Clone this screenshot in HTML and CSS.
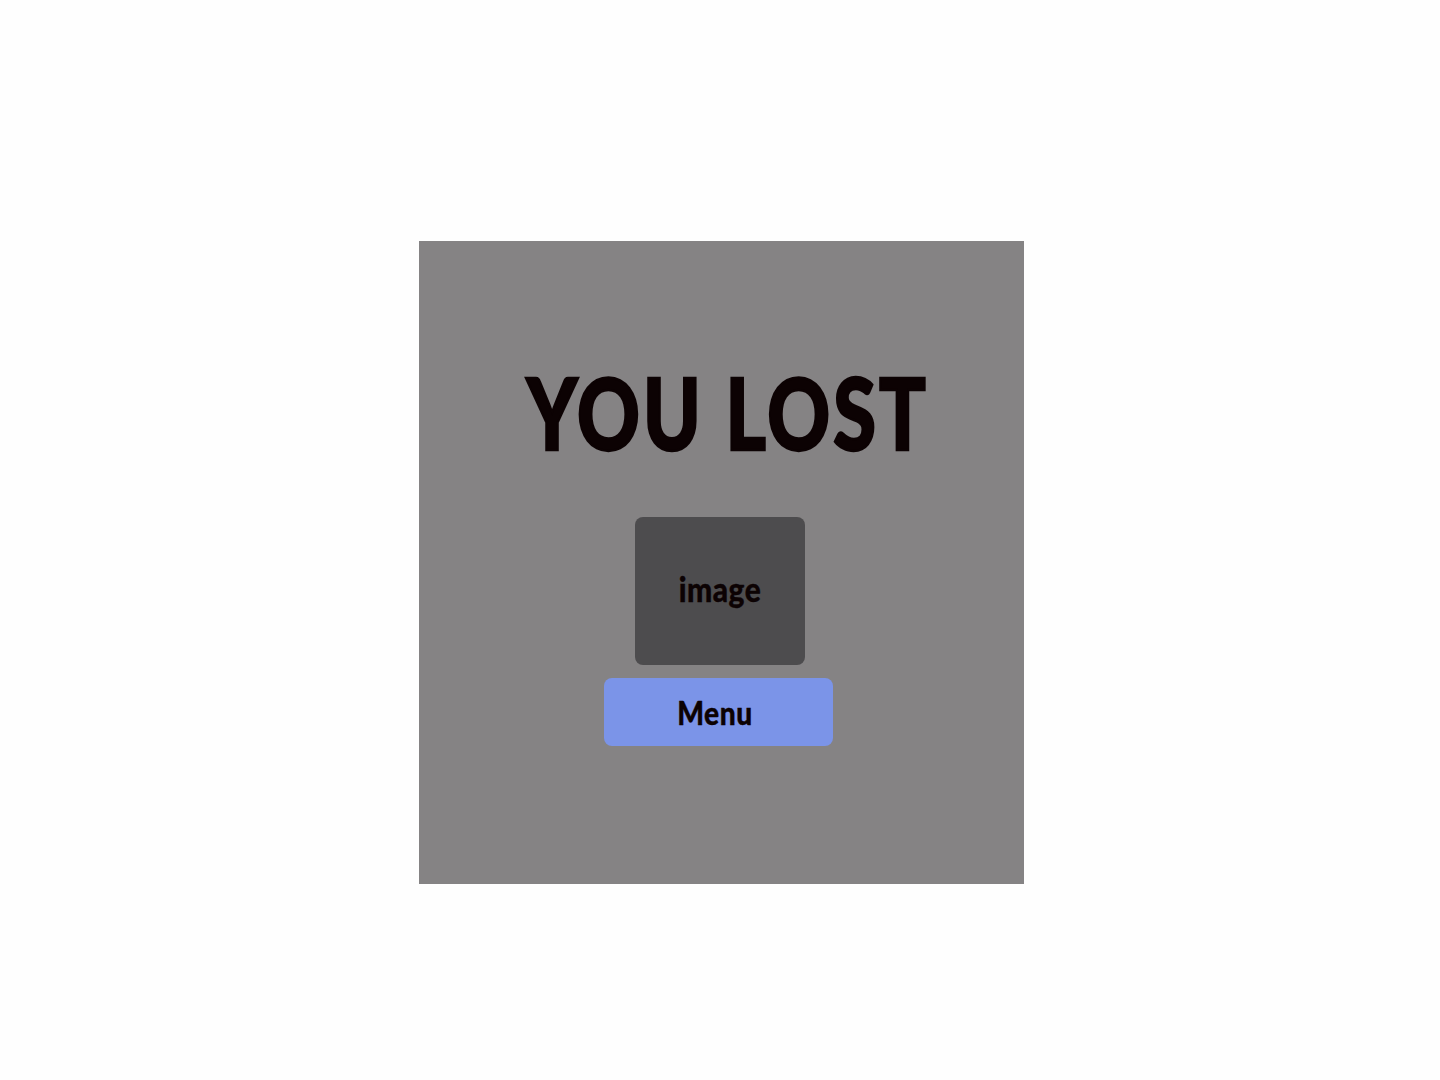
FILE: index.html
```html
<!DOCTYPE html>
<html>
<head>
<meta charset="utf-8">
<link rel="stylesheet" href="styles.css">
</head>
<body>
<div class="stage">
  <div class="panel">
    <h1 class="title"><span class="squash">YOU LOST</span></h1>
    <div class="image-box"><span class="squash small">image</span></div>
    <button class="menu-btn"><span class="squash small">Menu</span></button>
  </div>
</div>
</body>
</html>
```
FILE: styles.css
```css
html, body {
  margin: 0;
  padding: 0;
  background: #fefefe;
}
.stage {
  padding-top: 241px;
  padding-left: 419px;
}
.panel {
  width: 605px;
  height: 643px;
  background: #858384;
  display: flex;
  flex-direction: column;
  align-items: center;
  box-sizing: border-box;
  padding-top: 120px;
  font-family: Lato, "Liberation Sans", sans-serif;
  color: #0c0203;
}
.title {
  margin: 0 0 0 12px;
  font-size: 100px;
  line-height: 100px;
  font-weight: 900;
  letter-spacing: 4px;
  white-space: nowrap;
  -webkit-text-stroke: 2.5px #0c0203;
}
.squash {
  display: inline-block;
  transform: scaleX(0.775);
}
.small {
  transform: scaleX(0.88);
  letter-spacing: 0.6px;
  -webkit-text-stroke: 0.4px #0c0203;
}
.image-box {
  margin-top: 56px;
  margin-right: 3px;
  width: 170px;
  height: 148px;
  background: #4d4c4e;
  border-radius: 8px;
  display: flex;
  align-items: center;
  justify-content: center;
  font-size: 34px;
  font-weight: 900;
  padding-bottom: 5px;
  box-sizing: border-box;
}
.menu-btn {
  margin-top: 13px;
  margin-right: 6px;
  width: 229px;
  height: 68px;
  border: none;
  background: #7b94e8;
  border-radius: 8px;
  display: flex;
  align-items: center;
  justify-content: center;
  font-family: Lato, "Liberation Sans", sans-serif;
  font-size: 32px;
  font-weight: 900;
  color: #0c0203;
  padding: 0 8px 0 0;
}
```
